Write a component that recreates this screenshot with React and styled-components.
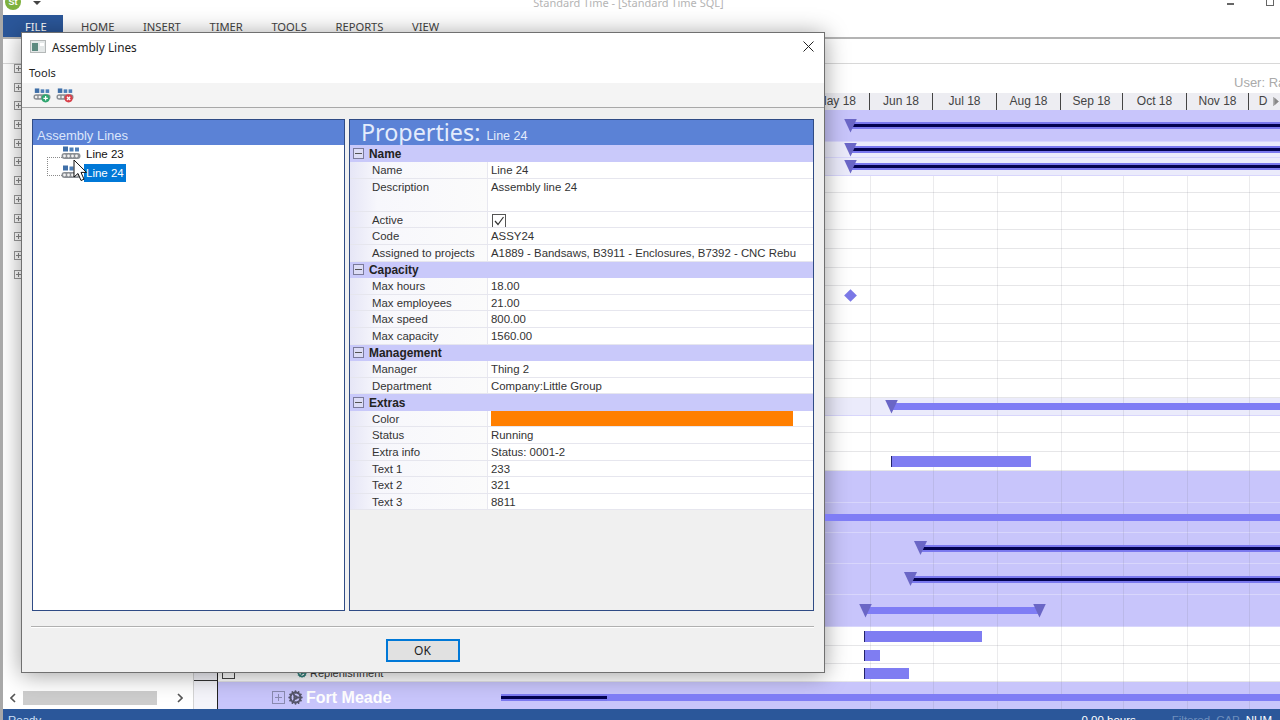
import React from 'react';
import styled, { createGlobalStyle } from 'styled-components';
import { Cog } from 'lucide-react';

const GANTT_X = 218;

const GlobalStyle = createGlobalStyle`
  html, body {
    margin: 0;
    padding: 0;
    background: #fff;
    overflow: hidden;
  }
  * {
    box-sizing: border-box;
  }
`;

const Screen = styled.div`
  position: relative;
  width: 1280px;
  height: 720px;
  overflow: hidden;
  display: flex;
  flex-direction: column;
  background: #fff;
  font-family: "Liberation Sans", Arial, sans-serif;
  border-left: 3px solid #a8a8a8;
`;

/* ---------- application behind the dialog ---------- */

const TitleBar = styled.div`
  height: 15px;
  display: flex;
  align-items: flex-start;
  position: relative;
  overflow: hidden;
`;

const AppBadge = styled.div`
  width: 16px;
  height: 16px;
  margin: -6px 0 0 2px;
  border-radius: 50%;
  background: #7eb13f;
  color: #fff;
  font-size: 9px;
  font-weight: bold;
  line-height: 16px;
  text-align: center;
`;

const QuickArrow = styled.div`
  width: 0;
  height: 0;
  margin: 1px 0 0 12px;
  border-left: 4px solid transparent;
  border-right: 4px solid transparent;
  border-top: 4px solid #444;
`;

const AppTitle = styled.div`
  flex: 1;
  text-align: center;
  margin: -4px 11px 0 0;
  font-family: "Noto Sans", sans-serif;
  font-size: 11px;
  line-height: 14px;
  color: #b4b4b4;
`;

const WindowButtons = styled.div`
  display: flex;
  gap: 32px;
  padding-right: 6px;
`;

const MinButton = styled.div`
  width: 7px;
  height: 2px;
  margin-top: 3px;
  background: #666;
`;

const MaxButton = styled.div`
  width: 8px;
  height: 6px;
  border: 1px solid #666;
  border-top: none;
`;

const TabBar = styled.div`
  height: 24px;
  display: flex;
  align-items: stretch;
  gap: 28.6px;
  border-bottom: 2px solid #b4b4b4;
  font-family: "Noto Sans", sans-serif;
  font-size: 11.2px;
`;

const FileTab = styled.div`
  width: 60px;
  margin-right: -10.6px;
  background: #2b579a;
  color: #fff;
  padding: 4px 0 0 22px;
`;

const Tab = styled.div`
  color: #444;
  padding-top: 4px;
`;

const RibbonBody = styled.div`
  height: 25px;
  border-bottom: 1px solid #d8d8d8;
`;

const Main = styled.div`
  flex: 1;
  min-height: 0;
  display: flex;
`;

const TreePane = styled.div`
  width: 190px;
  display: flex;
  flex-direction: column;
  padding: 0 0 3px 0;
`;

const TreeBoxes = styled.div`
  flex: 1;
  display: flex;
  flex-direction: column;
  gap: 9.7px;
  padding: 0 0 0 11px;
`;

const TreeBox = styled.div`
  width: 9px;
  height: 9px;
  border: 1px solid #999;
  background: linear-gradient(#888, #888) center / 5px 1px no-repeat,
    linear-gradient(#888, #888) center / 1px 5px no-repeat, #fff;
`;

const HScrollBar = styled.div`
  height: 16px;
  display: flex;
  align-items: center;
  padding: 0 10px 0 7px;
  color: #555;
`;

const ScrollThumb = styled.div`
  width: 134px;
  height: 14px;
  margin-left: 7px;
  background: #cdcdcd;
`;

const Gutter = styled.div`
  width: 25px;
  display: flex;
  flex-direction: column;
  justify-content: flex-end;
  background: #f4f4fa;
  border-left: 1px solid #d4d4d4;
  border-right: 1px solid #222;
`;

const GutterMark = styled.div`
  height: 29px;
  border-top: 1px solid #333;
`;

const GanttArea = styled.div`
  flex: 1;
  min-width: 0;
  display: flex;
  flex-direction: column;
`;

const InfoLine = styled.div`
  height: 29px;
  padding: 11px 0 0 1016px;
  font-size: 13px;
  line-height: 15px;
  color: #aaa;
  white-space: nowrap;
  overflow: hidden;
`;

const DateHeader = styled.div`
  height: 17px;
  display: flex;
  background: #ededf2;
  font-size: 12px;
  line-height: 17px;
  color: #444;
`;

const DateCell = styled.div`
  flex: 0 0 ${p => p.$width}px;
  text-align: ${p => (p.$first ? 'right' : 'center')};
  padding-right: ${p => (p.$first ? 13 : 0)}px;
  border-right: 1px solid #444;
  white-space: nowrap;
  overflow: hidden;
`;

const HeaderEnd = styled.div`
  position: relative;
  flex: 1;
  text-align: center;
  padding-right: 3px;
`;

const NavGlyph = styled.svg`
  position: absolute;
  right: 1px;
  top: 3px;
`;

const Rows = styled.div`
  position: relative;
  flex: 1;
  min-height: 0;
  overflow: hidden;
`;

const Row = styled.div`
  position: relative;
  height: ${p => p.$h}px;
  display: flex;
  align-items: center;
  gap: 3px;
  padding-left: ${p => p.$indent || 0}px;
  background: ${p => ({ dark: '#c8c5fb', light: '#ebebfb', white: '#fff' }[p.$tone])};
  border-bottom: 1px solid ${p => (p.$tone === 'white' ? '#e6e6e8' : '#d8d6fc')};
`;

const GridLine = styled.div`
  position: absolute;
  z-index: 1;
  top: 66px;
  bottom: 0;
  width: 1px;
  background: rgba(110, 110, 130, 0.14);
`;

const SummaryBar = styled.div`
  position: absolute;
  z-index: 2;
  top: 50%;
  height: 7px;
  margin-top: -3.5px;
  right: 0;
  background: linear-gradient(#7a78ee 0 2px, #03024f 2px 5px, #7a78ee 5px);
`;

const PlainBar = styled.div`
  position: absolute;
  z-index: 2;
  top: 50%;
  height: 7px;
  margin-top: -3.5px;
  background: #7f7df5;
`;

const TaskBar = styled.div`
  position: absolute;
  z-index: 2;
  top: 4px;
  height: 11px;
  background: #7f7df2;
  border-left: 1px solid #23236b;
`;

const Marker = styled.div`
  position: absolute;
  z-index: 3;
  top: 50%;
  width: 13px;
  height: 14px;
  margin: -7px 0 0 -6px;
  background: #6a66c6;
  clip-path: polygon(0 0, 100% 0, 50% 100%);
`;

const Diamond = styled.div`
  position: absolute;
  z-index: 3;
  top: 50%;
  width: 9px;
  height: 9px;
  margin: -4px 0 0 -4px;
  background: #7a78e6;
  transform: rotate(45deg);
`;

const RowBox = styled.div`
  width: 13px;
  height: 13px;
  border: 1px solid #8a8ab0;
  background: linear-gradient(#8a8ab0, #8a8ab0) center / 7px 1px no-repeat,
    linear-gradient(#8a8ab0, #8a8ab0) center / 1px 7px no-repeat;
`;

const RowLabel = styled.span`
  font-size: 11px;
  color: #333;
  white-space: nowrap;
`;

const GroupLabel = styled.span`
  font-size: 16px;
  font-weight: bold;
  color: #fff;
  white-space: nowrap;
`;

const PlainCheck = styled.div`
  position: absolute;
  left: 4px;
  top: 6px;
  width: 13px;
  height: 9px;
  border: 1px solid #444;
  border-top: none;
`;

const StatusBar = styled.div`
  height: 11px;
  margin-left: -3px;
  overflow: hidden;
  display: flex;
  background: #2b579a;
  font-size: 11.5px;
  line-height: 22px;
  color: #cfe0f6;
  padding-left: 8px;
`;

const StatusSpacer = styled.div`
  flex: 1;
`;

const StatusItem = styled.span`
  margin-right: ${p => p.$gap}px;
  color: ${p => (p.$dim ? '#6f8fbd' : '#fff')};
  white-space: nowrap;
`;

/* ---------- dialog ---------- */

const Dialog = styled.div`
  position: absolute;
  left: 18px;
  top: 32px;
  width: 804px;
  height: 641px;
  display: flex;
  flex-direction: column;
  background: #f0f0f0;
  border: 1px solid #707070;
  box-shadow: 0 2px 22px rgba(0, 0, 0, 0.38);
  font-family: "Noto Sans", sans-serif;
`;

const DialogTitle = styled.div`
  height: 29px;
  flex: none;
  display: flex;
  align-items: center;
  gap: 6px;
  padding: 0 10px 2px 8px;
  background: #fff;
  font-size: 11.8px;
  color: #222;
`;

const DialogTitleText = styled.span`
  flex: 1;
`;

const MenuLine = styled.div`
  height: 21px;
  flex: none;
  padding: 3px 0 0 7px;
  background: #fff;
  font-size: 11px;
  line-height: 15px;
  color: #222;
`;

const Toolbar = styled.div`
  height: 25px;
  flex: none;
  display: flex;
  align-items: center;
  gap: 5px;
  padding: 1px 0 0 11px;
  background: #f4f4f4;
  border-bottom: 1px solid #a8a8a8;
`;

const Panes = styled.div`
  height: 492px;
  flex: none;
  margin: 11px 10px 0 10px;
  display: flex;
  gap: 4px;
`;

const Pane = styled.div`
  display: flex;
  flex-direction: column;
  width: ${p => p.$width}px;
  background: ${p => p.$bg};
  border: 1px solid #2f4b85;
`;

const TreeHeader = styled.div`
  height: 25px;
  flex: none;
  padding: 8px 0 0 4px;
  background: #5b82d6;
  font-family: "Liberation Sans", Arial, sans-serif;
  font-size: 13px;
  line-height: 15px;
  color: #dbe6fb;
`;

const TreeItems = styled.div`
  position: relative;
  display: flex;
  flex-direction: column;
  gap: 1px;
  padding: 0 0 0 28px;
`;

const TreeDots = styled.div`
  position: absolute;
  left: 14px;
  top: 12px;
  width: 15px;
  height: 19px;
  border: 1px dotted #8a8a8a;
  border-right: none;
`;

const TreeItem = styled.div`
  height: 18px;
  display: flex;
  align-items: center;
  gap: 3px;
`;

const TreeText = styled.span`
  padding: 0 2px;
  font-family: "Liberation Sans", Arial, sans-serif;
  font-size: 11.5px;
  line-height: 18px;
  color: ${p => (p.$selected ? '#fff' : '#111')};
  background: ${p => (p.$selected ? '#0078d7' : 'transparent')};
`;

const PropsHeader = styled.div`
  height: 25px;
  flex: none;
  display: flex;
  align-items: center;
  gap: 6px;
  padding-left: 11px;
  background: #5b82d6;
  color: #e4ecfc;
  overflow: hidden;
`;

const PropsTitle = styled.span`
  font-family: "Noto Sans", sans-serif;
  font-size: 23.3px;
  line-height: 25px;
`;

const PropsName = styled.span`
  padding-top: 7px;
  font-family: "Liberation Sans", Arial, sans-serif;
  font-size: 12.5px;
  line-height: 15px;
`;

const PropGrid = styled.div`
  display: flex;
  flex-direction: column;
  padding-top: 0.4px;
  font-family: "Liberation Sans", Arial, sans-serif;
  font-size: 11.4px;
`;

const GroupRow = styled.div`
  height: 16.6px;
  display: flex;
  align-items: center;
  gap: 5px;
  padding-left: 3px;
  background: #c9c9fa;
  font-size: 11.9px;
  font-weight: bold;
  color: #222;
`;

const MinusBox = styled.div`
  width: 11px;
  height: 11px;
  border: 1px solid #7a7a9a;
  background: linear-gradient(#555, #555) center / 7px 1px no-repeat, #dcdcf6;
`;

const PropRow = styled.div`
  height: ${p => (p.$tall ? 33.2 : 16.6)}px;
  display: flex;
  background: #fff;
  border-bottom: 1px solid #e6e6ee;
`;

const PropLabel = styled.div`
  width: 138px;
  flex: none;
  padding: 1px 0 0 22px;
  line-height: 14px;
  color: #333;
  background: linear-gradient(90deg, #e6e6f6, #f7f7fc 20%, #fbfbfb);
  border-right: 1px solid #e8e8f0;
`;

const PropValue = styled.div`
  flex: 1;
  min-width: 0;
  padding: 1px 0 0 3px;
  line-height: 14px;
  color: #333;
  white-space: nowrap;
  overflow: hidden;
`;

const ColorSwatch = styled.div`
  width: 302px;
  height: 15px;
  margin-top: -1px;
  background: ${p => p.$color};
`;

const CheckBox = styled.div`
  width: 14px;
  height: 14px;
  margin: 1px 0 0 1px;
  display: flex;
  border: 1px solid #555;
  background: #fff;
`;

const FooterRule = styled.div`
  margin: 15px 10px 0 9px;
  height: 2px;
  flex: none;
  border-top: 1px solid #b0b0b0;
  border-bottom: 1px solid #fff;
`;

const Footer = styled.div`
  flex: 1;
  display: flex;
  justify-content: center;
  padding: 11px 1px 0 0;
`;

const OkButton = styled.button`
  width: 74px;
  height: 23px;
  padding: 0;
  background: #e1e1e1;
  border: 2px solid #0078d7;
  font-family: "Noto Sans", sans-serif;
  font-size: 12px;
  color: #222;
`;

const Pointer = styled.svg`
  position: absolute;
  left: 70px;
  top: 159px;
`;

/* ---------- drawings ---------- */

const Conveyor = ({ badge, width = 20 }) => (
  <svg width={width} height={width * 0.8} viewBox="0 0 20 16">
    <rect x="2" y="0.5" width="5" height="5" fill="#3f6fa8" />
    <rect x="8.5" y="1.5" width="4" height="4" fill="#4d7fb8" />
    <rect x="14" y="1.5" width="4" height="4" fill="#4d7fb8" />
    <rect x="0.5" y="7" width="19" height="6" rx="3" fill="#8b8f94" />
    {[3.5, 7.5, 11.5, 15.5].map(cx => (
      <circle key={cx} cx={cx} cy="10" r="1.4" fill="#f2f2f2" />
    ))}
    {badge === 'add' && (
      <g>
        <circle cx="14" cy="11.5" r="4.5" fill="#2fa56f" />
        <path d="M14 9v5M11.5 11.5h5" stroke="#fff" strokeWidth="1.4" />
      </g>
    )}
    {badge === 'remove' && (
      <g>
        <circle cx="14" cy="11.5" r="4.5" fill="#d8404a" />
        <path d="M12.2 9.7l3.6 3.6M15.8 9.7l-3.6 3.6" stroke="#fff" strokeWidth="1.4" />
      </g>
    )}
  </svg>
);

const WindowGlyph = () => (
  <svg width="16" height="13" viewBox="0 0 16 13">
    <rect x="0.5" y="0.5" width="15" height="12" fill="#e4e8e8" stroke="#b4b8b8" />
    <rect x="2" y="3" width="6" height="8" fill="#5d8a80" />
    <rect x="10" y="3" width="4" height="3" fill="#fff" />
  </svg>
);

const CloseGlyph = () => (
  <svg width="11" height="11" viewBox="0 0 11 11">
    <path d="M0.5 0.5l10 10M10.5 0.5l-10 10" stroke="#222" strokeWidth="1" />
  </svg>
);

const ScrollArrow = ({ dir }) => (
  <svg width="6" height="10" viewBox="0 0 6 10">
    <path
      d={dir === 'left' ? 'M5 1L1 5l4 4' : 'M1 1l4 4-4 4'}
      fill="none"
      stroke="#555"
      strokeWidth="1.6"
    />
  </svg>
);

/* ---------- data ---------- */

const tabs = ['HOME', 'INSERT', 'TIMER', 'TOOLS', 'REPORTS', 'VIEW'];

const monthCells = [
  { label: 'May 18', width: 652, first: true },
  { label: 'Jun 18', width: 63 },
  { label: 'Jul 18', width: 64 },
  { label: 'Aug 18', width: 64 },
  { label: 'Sep 18', width: 62 },
  { label: 'Oct 18', width: 64 },
  { label: 'Nov 18', width: 62 },
];

const gridXs = [870, 933, 997, 1061, 1123, 1187, 1249];

const whiteRows = Array.from({ length: 11 }, (_, i) => ({
  h: i % 2 ? 18.6 : 18.7,
  tone: 'white',
  diamond: i === 5 ? 850 : null,
}));

const ganttRows = [
  { h: 32, tone: 'dark', summary: 851, marker: 850 },
  { h: 16, tone: 'light', summary: 851, marker: 850 },
  { h: 18, tone: 'light', summary: 851, marker: 850 },
  { h: 17, tone: 'white' },
  ...whiteRows,
  { h: 18, tone: 'light', plain: [891, 389], marker: 891 },
  { h: 17, tone: 'white' },
  { h: 19, tone: 'white' },
  { h: 19, tone: 'white', task: [891, 140] },
  { h: 32, tone: 'dark' },
  { h: 30, tone: 'dark', plain: [825, 455] },
  { h: 31, tone: 'dark', summary: 921, marker: 920 },
  { h: 31, tone: 'dark', summary: 911, marker: 910 },
  { h: 32, tone: 'dark', plain: [866, 172], marker: 865, endMarker: 1039 },
  { h: 19, tone: 'white', task: [864, 118] },
  { h: 18, tone: 'white', task: [864, 16] },
  { h: 18, tone: 'white', task: [864, 45], indent: 79, label: 'Replenishment', check: true },
];

const groups = [
  {
    name: 'Name',
    rows: [
      { label: 'Name', value: 'Line 24' },
      { label: 'Description', value: 'Assembly line 24', tall: true },
      { label: 'Active', check: true },
      { label: 'Code', value: 'ASSY24' },
      { label: 'Assigned to projects', value: 'A1889 - Bandsaws, B3911 - Enclosures, B7392 - CNC Rebu' },
    ],
  },
  {
    name: 'Capacity',
    rows: [
      { label: 'Max hours', value: '18.00' },
      { label: 'Max employees', value: '21.00' },
      { label: 'Max speed', value: '800.00' },
      { label: 'Max capacity', value: '1560.00' },
    ],
  },
  {
    name: 'Management',
    rows: [
      { label: 'Manager', value: 'Thing 2' },
      { label: 'Department', value: 'Company:Little Group' },
    ],
  },
  {
    name: 'Extras',
    rows: [
      { label: 'Color', color: '#ff7f00' },
      { label: 'Status', value: 'Running' },
      { label: 'Extra info', value: 'Status: 0001-2' },
      { label: 'Text 1', value: '233' },
      { label: 'Text 2', value: '321' },
      { label: 'Text 3', value: '8811' },
    ],
  },
];

const offset = x => x - GANTT_X;

const GanttRow = ({ row }) => (
  <Row $h={row.h} $tone={row.tone} $indent={row.indent}>
    {row.check && <PlainCheck />}
    {row.label && (
      <>
        <Cog size={10} color="#2f7f7a" strokeWidth={3} />
        <RowLabel>{row.label}</RowLabel>
      </>
    )}
    {row.summary && <SummaryBar style={{ left: offset(row.summary) }} />}
    {row.plain && <PlainBar style={{ left: offset(row.plain[0]), width: row.plain[1] }} />}
    {row.task && <TaskBar style={{ left: offset(row.task[0]), width: row.task[1] }} />}
    {row.marker && <Marker style={{ left: offset(row.marker) }} />}
    {row.endMarker && <Marker style={{ left: offset(row.endMarker) }} />}
    {row.diamond && <Diamond style={{ left: offset(row.diamond) }} />}
  </Row>
);

export default function App() {
  return (
    <Screen>
      <GlobalStyle />

      <TitleBar>
        <AppBadge>St</AppBadge>
        <QuickArrow />
        <AppTitle>Standard Time - [Standard Time SQL]</AppTitle>
        <WindowButtons>
          <MinButton />
          <MaxButton />
        </WindowButtons>
      </TitleBar>

      <TabBar>
        <FileTab>FILE</FileTab>
        {tabs.map(tab => (
          <Tab key={tab}>{tab}</Tab>
        ))}
      </TabBar>
      <RibbonBody />

      <Main>
        <TreePane>
          <TreeBoxes>
            {Array.from({ length: 12 }, (_, i) => (
              <TreeBox key={i} />
            ))}
          </TreeBoxes>
          <HScrollBar>
            <ScrollArrow dir="left" />
            <ScrollThumb />
            <StatusSpacer />
            <ScrollArrow dir="right" />
          </HScrollBar>
        </TreePane>
        <Gutter>
          <GutterMark />
        </Gutter>
        <GanttArea>
          <InfoLine>User: Ra</InfoLine>
          <DateHeader>
            {monthCells.map(cell => (
              <DateCell key={cell.label} $width={cell.width} $first={cell.first}>
                {cell.label}
              </DateCell>
            ))}
            <HeaderEnd>
              D
              <NavGlyph width="6" height="11" viewBox="0 0 6 11">
                <path d="M0.5 1v9M1.5 2l4 3.5-4 3.5z" fill="#888" stroke="#888" strokeWidth="0.6" />
              </NavGlyph>
            </HeaderEnd>
          </DateHeader>
          <Rows>
            {ganttRows.map((row, i) => (
              <GanttRow key={i} row={row} />
            ))}
            <Row $h={32} $tone="dark" $indent={54}>
              <RowBox />
              <Cog size={15} color="#55556a" strokeWidth={3} />
              <GroupLabel>Fort Meade</GroupLabel>
              <SummaryBar style={{ left: offset(501), right: 'auto', width: 106 }} />
              <PlainBar style={{ left: offset(607), right: 0 }} />
            </Row>
            {gridXs.map(x => (
              <GridLine key={x} style={{ left: offset(x) }} />
            ))}
          </Rows>
        </GanttArea>
      </Main>

      <StatusBar>
        <span>Ready</span>
        <StatusSpacer />
        <StatusItem $gap={36}>0.00 hours</StatusItem>
        <StatusItem $dim $gap={6}>Filtered</StatusItem>
        <StatusItem $dim $gap={6}>CAP</StatusItem>
        <StatusItem $gap={8}>NUM</StatusItem>
      </StatusBar>

      <Dialog>
        <DialogTitle>
          <WindowGlyph />
          <DialogTitleText>Assembly Lines</DialogTitleText>
          <CloseGlyph />
        </DialogTitle>
        <MenuLine>Tools</MenuLine>
        <Toolbar>
          <Conveyor badge="add" width={18} />
          <Conveyor badge="remove" width={18} />
        </Toolbar>

        <Panes>
          <Pane $width={313} $bg="#fff">
            <TreeHeader>Assembly Lines</TreeHeader>
            <TreeItems>
              <TreeDots />
              <TreeItem>
                <Conveyor />
                <TreeText>Line 23</TreeText>
              </TreeItem>
              <TreeItem>
                <Conveyor />
                <TreeText $selected>Line 24</TreeText>
              </TreeItem>
            </TreeItems>
          </Pane>

          <Pane $width={465} $bg="#f0f0f0">
            <PropsHeader>
              <PropsTitle>Properties:</PropsTitle>
              <PropsName>Line 24</PropsName>
            </PropsHeader>
            <PropGrid>
              {groups.map(group => (
                <React.Fragment key={group.name}>
                  <GroupRow>
                    <MinusBox />
                    {group.name}
                  </GroupRow>
                  {group.rows.map(row => (
                    <PropRow key={row.label} $tall={row.tall}>
                      <PropLabel>{row.label}</PropLabel>
                      <PropValue>
                        {row.value}
                        {row.color && <ColorSwatch $color={row.color} />}
                        {row.check && (
                          <CheckBox>
                            <svg width="12" height="12" viewBox="0 0 12 12">
                              <path d="M2 6l3 3.5L10.5 2" fill="none" stroke="#333" strokeWidth="1.2" />
                            </svg>
                          </CheckBox>
                        )}
                      </PropValue>
                    </PropRow>
                  ))}
                </React.Fragment>
              ))}
            </PropGrid>
          </Pane>
        </Panes>

        <FooterRule />
        <Footer>
          <OkButton>OK</OkButton>
        </Footer>
      </Dialog>

      <Pointer width="16" height="24" viewBox="0 0 16 24">
        <path
          d="M1 1v17l4-3.5 3 7 3-1.3-3-6.8h5.5z"
          fill="#fff"
          stroke="#111"
          strokeWidth="1"
          strokeLinejoin="round"
        />
      </Pointer>
    </Screen>
  );
}
